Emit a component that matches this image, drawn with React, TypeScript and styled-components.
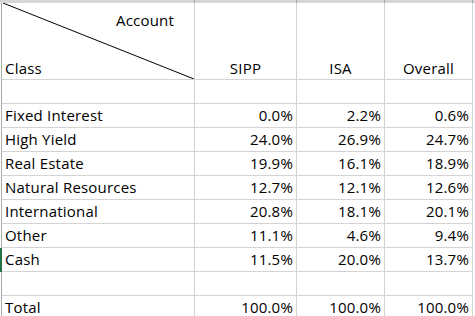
import React, { FunctionComponent } from 'react';
import styled, { createGlobalStyle } from 'styled-components';

const GlobalStyle = createGlobalStyle`
	html, body {
		margin: 0;
		padding: 0;
		background: #ffffff;
	}
	* {
		box-sizing: border-box;
	}
`;

interface Allocation {
	name: string;
	sipp: string;
	isa: string;
	overall: string;
	selected?: boolean;
}

const rows: Allocation[] = [
	{ name: 'Fixed Interest', sipp: '0.0%', isa: '2.2%', overall: '0.6%' },
	{ name: 'High Yield', sipp: '24.0%', isa: '26.9%', overall: '24.7%' },
	{ name: 'Real Estate', sipp: '19.9%', isa: '16.1%', overall: '18.9%' },
	{ name: 'Natural Resources', sipp: '12.7%', isa: '12.1%', overall: '12.6%' },
	{ name: 'International', sipp: '20.8%', isa: '18.1%', overall: '20.1%' },
	{ name: 'Other', sipp: '11.1%', isa: '4.6%', overall: '9.4%' },
	{ name: 'Cash', sipp: '11.5%', isa: '20.0%', overall: '13.7%', selected: true },
];

const Sheet = styled.div`
	display: flex;
	flex-direction: column;
	width: 475px;
	height: 316px;
	overflow: hidden;
	font-family: 'Open Sans', 'Liberation Sans', sans-serif;
	font-size: 15px;
	letter-spacing: 0.2px;
	color: #000000;
`;

const Row = styled.div<{ height: number }>`
	display: grid;
	grid-template-columns: 2px 193px 102px 88px 88px;
	height: ${({ height }) => height}px;
	flex: none;
`;

const HeaderStrip = styled(Row)`
	background: #d6d6d6;
`;

const StripCell = styled.div`
	border-right: 1px solid #a8a8a8;
	&:first-child {
		border-right: none;
	}
`;

const Gutter = styled.div<{ selected?: boolean }>`
	border-right: 1px solid ${({ selected }) => (selected ? '#217346' : '#ababab')};
	background: ${({ selected }) => (selected ? '#217346' : '#ffffff')};
`;

const Cell = styled.div<{ align?: 'left' | 'center' | 'right' }>`
	display: flex;
	align-items: center;
	justify-content: ${({ align }) =>
		align === 'right' ? 'flex-end' : align === 'center' ? 'center' : 'flex-start'};
	padding: 0 ${({ align }) => (align === 'right' ? '3px' : '0')} 1px
		${({ align }) => (align === 'left' || !align ? '3px' : '0')};
	border-right: 1px solid #d4d4d4;
	border-bottom: 1px solid #d4d4d4;
	line-height: 19px;
	white-space: nowrap;
`;

const HeadCell = styled(Cell)`
	align-items: flex-end;
	padding-bottom: 1px;
`;

const CornerCell = styled.div`
	position: relative;
	display: flex;
	flex-direction: column;
	justify-content: space-between;
	padding: 8px 0 1px 3px;
	border-right: 1px solid #d4d4d4;
	border-bottom: 1px solid #d4d4d4;
	line-height: 19px;
`;

const AccountLabel = styled.span`
	align-self: flex-end;
	padding-right: 20px;
`;

const Diagonal = styled.svg`
	position: absolute;
	left: 0;
	top: 0;
	width: 100%;
	height: 100%;
	pointer-events: none;
`;

const DataRow: FunctionComponent<{ item?: Allocation }> = ({ item }) => (
	<Row height={24}>
		<Gutter selected={item?.selected} />
		<Cell>{item?.name}</Cell>
		<Cell align='right'>{item?.sipp}</Cell>
		<Cell align='right'>{item?.isa}</Cell>
		<Cell align='right'>{item?.overall}</Cell>
	</Row>
);

const App: FunctionComponent = () => (
	<>
		<GlobalStyle />
		<Sheet>
			<HeaderStrip height={3}>
				<StripCell />
				<StripCell />
				<StripCell />
				<StripCell />
				<StripCell />
			</HeaderStrip>
			<Row height={77}>
				<Gutter />
				<CornerCell>
					<AccountLabel>Account</AccountLabel>
					<span>Class</span>
					<Diagonal viewBox='0 0 192 76' preserveAspectRatio='none'>
						<line x1='1' y1='0' x2='192' y2='76' stroke='#000' strokeWidth='1' />
					</Diagonal>
				</CornerCell>
				<HeadCell align='center'>SIPP</HeadCell>
				<HeadCell align='center'>ISA</HeadCell>
				<HeadCell align='center'>Overall</HeadCell>
			</Row>
			<DataRow />
			{rows.map((r) => (
				<DataRow key={r.name} item={r} />
			))}
			<DataRow />
			<DataRow item={{ name: 'Total', sipp: '100.0%', isa: '100.0%', overall: '100.0%' }} />
		</Sheet>
	</>
);

export default App;
